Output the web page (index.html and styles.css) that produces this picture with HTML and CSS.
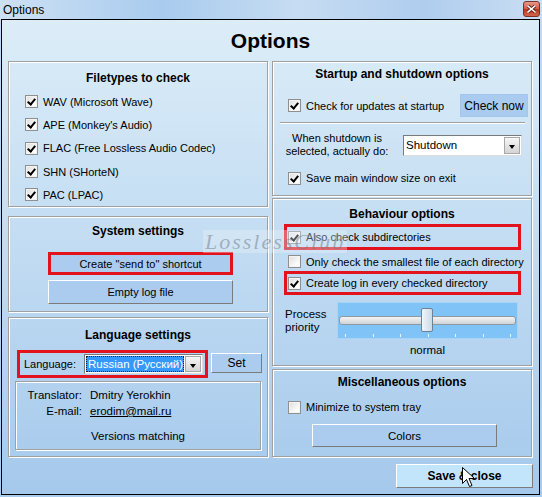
FILE: index.html
```html
<!DOCTYPE html>
<html>
<head>
<meta charset="utf-8">
<title>Options</title>
<link rel="stylesheet" href="styles.css">
</head>
<body>
<div class="titlebar">
  <span class="t">Options</span>
  <span class="close"><svg width="9" height="8" viewBox="0 0 9 8"><path d="M1 1L8 7M8 1L1 7" stroke="#5a1a10" stroke-width="3.2" stroke-linecap="square"/><path d="M1 1L8 7M8 1L1 7" stroke="#fff" stroke-width="1.6" stroke-linecap="square"/></svg></span>
</div>
<div class="window">
  <h1 class="heading">Options</h1>
  <div class="columns">
    <div class="col">
      <section class="group g-ft">
        <h2 class="gtitle">Filetypes to check</h2>
        <div class="list">
          <label class="row"><span class="cb on"></span>WAV (Microsoft Wave)</label>
          <label class="row"><span class="cb on"></span>APE (Monkey's Audio)</label>
          <label class="row"><span class="cb on"></span>FLAC (Free Lossless Audio Codec)</label>
          <label class="row"><span class="cb on"></span>SHN (SHorteN)</label>
          <label class="row"><span class="cb on"></span>PAC (LPAC)</label>
        </div>
      </section>
      <section class="group g-sys">
        <h2 class="gtitle">System settings</h2>
        <button class="btn wide red-btn">Create "send to" shortcut</button>
        <button class="btn wide btn-empty">Empty log file</button>
      </section>
      <section class="group g-lang">
        <h2 class="gtitle">Language settings</h2>
        <div class="langrow">
          <div class="redbox langbox">
            <span class="langlabel">Language:</span>
            <div class="select lang-select"><span class="sel-text">Russian (Русский)</span><span class="arrow"></span></div>
          </div>
          <button class="btn setbtn">Set</button>
        </div>
        <div class="infobox">
          <div class="inforow"><span class="ilabel">Translator:</span><span>Dmitry Yerokhin</span></div>
          <div class="inforow"><span class="ilabel">E-mail:</span><span class="link">erodim@mail.ru</span></div>
          <div class="versions">Versions matching</div>
        </div>
      </section>
    </div>
    <div class="col">
      <section class="group g-start">
        <h2 class="gtitle">Startup and shutdown options</h2>
        <div class="updrow">
          <label class="row plain"><span class="cb on"></span>Check for updates at startup</label>
          <button class="btn checknow">Check now</button>
        </div>
        <div class="sep"></div>
        <div class="shutrow">
          <div class="shutlabel">When shutdown is<br>selected, actually do:</div>
          <div class="select shut-select"><span class="sel-plain">Shutdown</span><span class="arrow"></span></div>
        </div>
        <label class="row r-save"><span class="cb on"></span>Save main window size on exit</label>
      </section>
      <section class="group g-beh">
        <h2 class="gtitle">Behaviour options</h2>
        <div class="redbox beh1"><label class="row plain"><span class="cb on"></span>Also check subdirectories</label></div>
        <label class="row r-only"><span class="cb"></span>Only check the smallest file of each directory</label>
        <div class="redbox beh2"><label class="row plain"><span class="cb on"></span>Create log in every checked directory</label></div>
        <div class="prio">
          <div class="priolabel">Process<br>priority</div>
          <div class="slidercol">
            <div class="slider">
              <div class="track"></div>
              <div class="thumb"></div>
              <div class="ticks"><i></i><i></i><i></i><i></i><i></i><i></i><i></i></div>
            </div>
            <div class="normal">normal</div>
          </div>
        </div>
      </section>
      <section class="group g-misc">
        <h2 class="gtitle">Miscellaneous options</h2>
        <label class="row r-min"><span class="cb"></span>Minimize to system tray</label>
        <button class="btn wide colors">Colors</button>
      </section>
    </div>
  </div>
  <div class="footer"><button class="btn save">Save &amp; close</button></div>
</div>
<div class="watermark">LosslessClub</div>
<svg class="cursor" width="13" height="21" viewBox="0 0 13 21"><path d="M0.5 0.5V16.5L4.5 12.5L7.5 19.5L10 18.5L7 11.5H12.5Z" fill="#fff" stroke="#000" stroke-width="1" stroke-linejoin="miter"/></svg>
</body>
</html>
```
FILE: styles.css
```css
* { box-sizing: border-box; margin: 0; padding: 0; }
body {
  width: 542px; height: 497px; overflow: hidden; position: relative;
  background: linear-gradient(#c4dbf1, #a9cbed);
  font-family: "Liberation Sans", Arial, sans-serif; font-size: 11px; color: #000;
}
.titlebar {
  height: 19px; display: flex; align-items: center; justify-content: space-between;
  padding: 0 2px 0 3px;
  background: linear-gradient(90deg, #cde1f4 0%, #a9cbee 30%, #c6dcf2 55%, #b0cdee 78%, #c9def3 100%);
}
.titlebar .t { font-size: 12px; }
.close {
  width: 17px; height: 16px; margin-top: -2px; display: flex; align-items: center; justify-content: center;
  border: 1px solid #7a3126; border-radius: 3px;
  background: linear-gradient(#e59a8c, #cf5a45 50%, #b8361f 51%, #d0654c);
}
.window {
  margin-left: 1px; width: 539px; height: 476px; border: 1px solid #000;
  background: linear-gradient(#dcedf8, #a5c9ec);
}
.heading { height: 41px; display: flex; align-items: center; justify-content: center; font-size: 21px; font-weight: bold; }
.columns { display: flex; gap: 3px; padding-left: 6px; }
.col { width: 261px; display: flex; flex-direction: column; }
.group { width: 260px; border: 1px solid #a0a0a0; box-shadow: inset 1px 1px #fff, 1px 1px #fff; }
.gtitle { font-size: 12px; font-weight: bold; text-align: center; line-height: 16px; }
.row { display: flex; align-items: center; gap: 5px; }
.cb {
  width: 13px; height: 13px; flex: none; border: 1px solid #8e8f8f;
  background: linear-gradient(135deg, #dcdcdc, #fbfbfb 70%); box-shadow: inset 0 0 0 1px #f4f4f4; position: relative;
}
.cb.on::after {
  content: ""; position: absolute; left: 2px; top: 0px; width: 3px; height: 6px;
  border: solid #000; border-width: 0 2px 2px 0; transform: translate(1px, 1px) rotate(40deg);
}
.btn {
  font-family: inherit; font-size: 11px; color: #000; display: flex; align-items: center; justify-content: center;
  background: #abcbef; border: 1px solid; border-color: #fff #7b7b7b #7b7b7b #fff;
}
.wide { width: 185px; height: 23px; margin-left: 39px; }
.red-btn { margin-top: 13px; border: 3px solid #e3131e; }
.btn-empty { margin-top: 5px; height: 24px; }

/* Filetypes */
.g-ft { height: 146px; padding-top: 8px; }
.list { margin-top: 4px; }
.list .row { height: 23.3px; padding-left: 16px; }

/* System */
.g-sys { height: 96px; margin-top: 9px; padding-top: 6px; }

/* Language */
.g-lang { height: 140px; margin-top: 5px; padding-top: 9px; }
.langrow { display: flex; margin-top: 7px; margin-left: 8px; }
.redbox { border: 3px solid #e3131e; }
.langbox { width: 191px; height: 28px; display: flex; align-items: center; }
.langlabel { width: 64px; padding-left: 4px; }
.select {
  position: relative; display: flex; align-items: center; background: #fff;
  border: 1px solid; border-color: #7a7a7a #dcdcdc #dcdcdc #7a7a7a;
}
.lang-select { width: 119px; height: 20px; padding: 1px 18px 1px 1px; }
.sel-text { flex: 1; height: 100%; background: #3399ff; color: #fff; padding-left: 2px; line-height: 16px; outline: 1px dotted #222; outline-offset: -1px; white-space: nowrap; overflow: hidden; font-size: 11.5px; }
.sel-plain { padding-left: 2px; font-size: 11.5px; }
.arrow {
  position: absolute; right: 1px; top: 1px; bottom: 1px; width: 16px;
  background: linear-gradient(#f6f6f6, #d4d4d4); border: 1px solid #a8a8a8;
}
.arrow::after {
  content: ""; position: absolute; left: 4px; top: 7px;
  border-left: 3.5px solid transparent; border-right: 3.5px solid transparent; border-top: 4px solid #000;
}
.setbtn { width: 51px; height: 20px; margin-left: 3px; margin-top: 3px; font-size: 12px; }
.infobox {
  width: 246px; height: 69px; margin: 3px 0 0 6px; padding-top: 5px;
  border: 1px solid #a0a0a0; box-shadow: inset 1px 1px #fff, 1px 1px #fff;
}
.inforow { display: flex; gap: 8px; line-height: 16px; font-size: 11.5px; }
.ilabel { width: 66px; text-align: right; }
.link { text-decoration: underline; }
.versions { margin-top: 9px; line-height: 16px; text-align: center; font-size: 11.5px; }

/* Startup */
.g-start { height: 135px; padding-top: 4px; }
.updrow { display: flex; align-items: center; height: 23px; margin-top: 12px; padding: 0 3px 0 15px; }
.row.plain { gap: 5px; }
.checknow { margin-left: auto; width: 68px; height: 23px; border: 1px solid #a3c6ec; background: #a8cbef; font-size: 12px; }
.sep { margin: 5px 0 0 7px; width: 245px; height: 2px; border-top: 1px solid #a0a0a0; border-bottom: 1px solid #fff; }
.shutrow { display: flex; align-items: center; height: 26px; margin-top: 8px; padding-left: 10px; }
.shutlabel { width: 108px; text-align: center; line-height: 13px; font-size: 11px; white-space: nowrap; }
.shut-select { width: 119px; height: 21px; margin-left: 12px; }
.r-save { height: 20px; margin-top: 10px; padding-left: 15px; }

/* Behaviour */
.g-beh { height: 168px; margin-top: 2px; padding-top: 7px; }
.beh1 { width: 237px; height: 26px; margin: 2px 0 0 11px; display: flex; align-items: center; padding-left: 1px; }
.r-only { height: 19px; margin-top: 2px; padding-left: 15px; }
.beh2 { width: 237px; height: 24px; margin: 0 0 0 11px; display: flex; align-items: center; padding-left: 1px; }
.prio { display: flex; margin-top: 7px; padding-left: 12px; }
.priolabel { width: 52px; height: 37px; display: flex; align-items: center; line-height: 13px; font-size: 11.5px; }
.slidercol { width: 181px; }
.slider { position: relative; height: 37px; background: #7fc3f7; border: 1px solid #a9d4f6; }
.track {
  position: absolute; left: 1px; right: 1px; top: 13px; height: 9px; border-radius: 3px;
  border: 1px solid #8d9aa6; background: linear-gradient(#f4f4f4, #cfd3d6);
}
.thumb {
  position: absolute; left: 83px; top: 5px; width: 12px; height: 24px; border-radius: 2px;
  border: 1px solid #6f8294; background: linear-gradient(90deg, #f0f6fb, #cbd9e6);
}
.ticks { position: absolute; left: 7px; right: 6px; bottom: 1px; height: 3px; display: flex; justify-content: space-between; }
.ticks i { width: 1px; height: 3px; background: #eaf5fe; }
.normal { margin-top: 3px; line-height: 16px; text-align: center; font-size: 11.5px; }

/* Misc */
.g-misc { height: 88px; margin-top: 3px; padding-top: 4px; }
.r-min { height: 20px; margin-top: 7px; padding-left: 15px; }
.colors { margin-top: 7px; font-size: 11.5px; }

.footer { display: flex; justify-content: flex-end; padding-right: 6px; margin-top: 7px; }
.save { width: 137px; height: 24px; background: #c3e5fb; font-weight: bold; font-size: 12px; }

.watermark {
  position: absolute; left: 203px; top: 230px; height: 23px; padding: 0 2px;
  font-family: "Liberation Serif", serif; font-style: italic; font-size: 22px; line-height: 23px; letter-spacing: 2px;
  color: rgba(110, 120, 135, 0.5); background: rgba(235, 243, 250, 0.35);
}
.cursor { position: absolute; left: 462px; top: 467px; }
```
